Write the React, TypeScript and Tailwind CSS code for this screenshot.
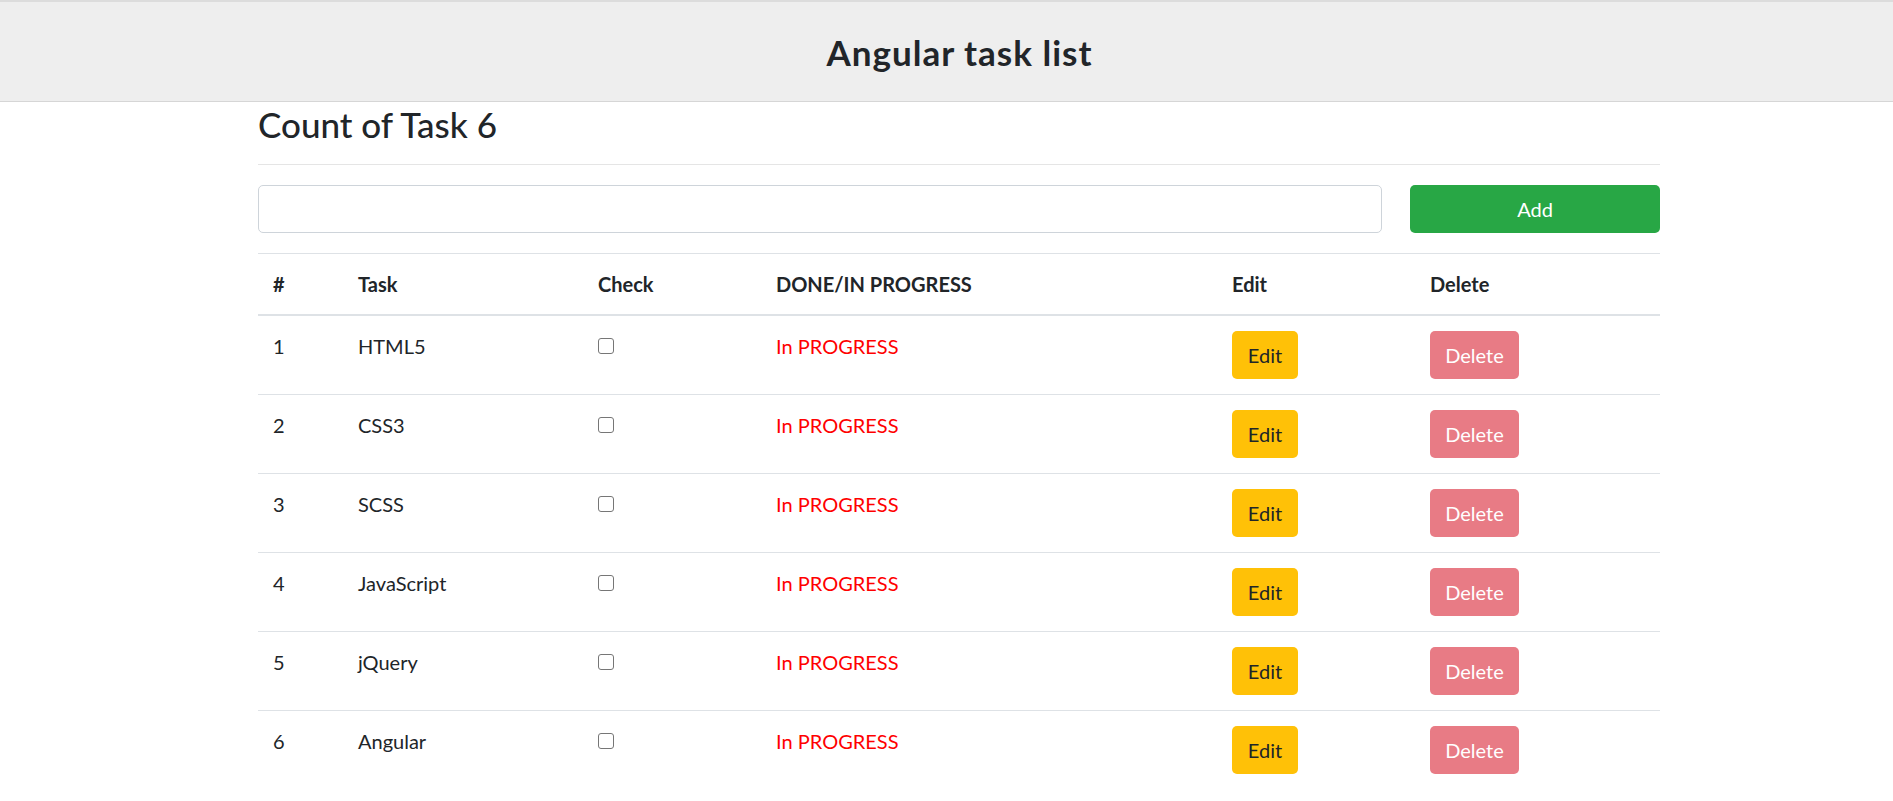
import { useState } from 'react'

const initialTasks = ['HTML5', 'CSS3', 'SCSS', 'JavaScript', 'jQuery', 'Angular']

export default function App() {
  const [tasks] = useState(initialTasks)
  const [value, setValue] = useState('')

  return (
    <div className="min-h-screen bg-white text-[#212529] font-['Segoe_UI','Lato',sans-serif]">
      <header className="h-[102px] border-t-2 border-b border-t-[#dcdcdc] border-b-[#d6d6d6] bg-[#eeeeee] pl-[26px] flex items-center justify-center">
        <h1 className="text-[35px] leading-[42px] font-bold tracking-[1px]">Angular task list</h1>
      </header>

      <main className="ml-[258px] w-[1402px]">
        <h2 className="pt-[1px] text-[35px] leading-[42px] font-medium">Count of Task {tasks.length}</h2>
        <hr className="mt-[19px] border-0 border-t border-[#e5e5e5]" />

        <div className="mt-[20px] flex gap-[28px]">
          <input
            value={value}
            onChange={(e) => setValue(e.target.value)}
            className="h-[48px] flex-1 rounded-[5px] border border-[#ced4da] px-[15px] text-[20px] outline-none"
          />
          <button className="h-[48px] w-[250px] rounded-[5px] bg-[#28a745] text-[20px] text-white">Add</button>
        </div>

        <table className="mt-[20px] w-full table-fixed border-collapse text-[20px] leading-[30px]">
          <colgroup>
            <col className="w-[85px]" />
            <col className="w-[240px]" />
            <col className="w-[178px]" />
            <col className="w-[456px]" />
            <col className="w-[198px]" />
            <col className="w-[245px]" />
          </colgroup>
          <thead>
            <tr>
              {['#', 'Task', 'Check', 'DONE/IN PROGRESS', 'Edit', 'Delete'].map((h) => (
                <th
                  key={h}
                  className="border-t border-b-2 border-[#dee2e6] p-[15px] text-left align-bottom font-bold"
                >
                  {h}
                </th>
              ))}
            </tr>
          </thead>
          <tbody>
            {tasks.map((t, i) => (
              <tr key={t}>
                <td className="border-t border-[#dee2e6] p-[15px] align-top">{i + 1}</td>
                <td className="border-t border-[#dee2e6] p-[15px] align-top">{t}</td>
                <td className="border-t border-[#dee2e6] p-[15px] align-top">
                  <div className="flex h-[30px] items-center">
                    <input
                      type="checkbox"
                      className="h-[16px] w-[16px] appearance-none rounded-[3px] border border-[#767676] bg-white"
                    />
                  </div>
                </td>
                <td className="border-t border-[#dee2e6] p-[15px] align-top text-[#ff0000]">In PROGRESS</td>
                <td className="border-t border-[#dee2e6] p-[15px] align-top">
                  <button className="h-[48px] w-[66px] rounded-[5px] bg-[#ffc107] text-[20px] text-[#212529]">
                    Edit
                  </button>
                </td>
                <td className="border-t border-[#dee2e6] p-[15px] align-top">
                  <button className="h-[48px] w-[89px] rounded-[5px] bg-[#dc3545] text-[20px] text-white opacity-65">
                    Delete
                  </button>
                </td>
              </tr>
            ))}
          </tbody>
        </table>
      </main>
    </div>
  )
}
